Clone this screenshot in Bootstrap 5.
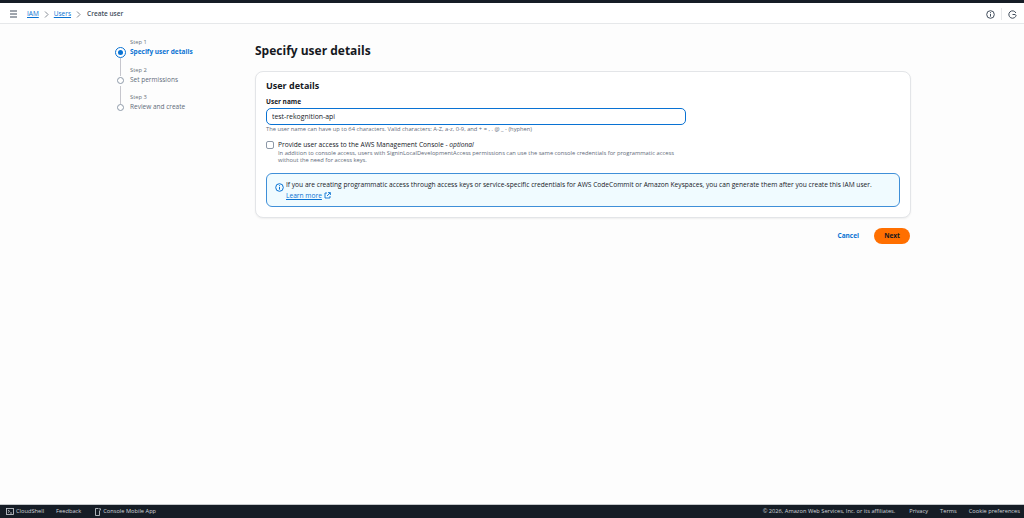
<!DOCTYPE html>
<html lang="en">
<head>
    <meta charset="UTF-8">
    <title>Create user</title>
    <link href="https://cdn.jsdelivr.net/npm/bootstrap@5.3.0/dist/css/bootstrap.min.css" rel="stylesheet">
    <style>
        html, body { height: 518px; overflow: hidden; }
        body { font-family: "Open Sans", "Noto Sans", sans-serif; background: #fdfdfd; color: #16191f; display: flex; flex-direction: column; }
        a { color: #0972d3; }
        .top-strip { height: 3px; background: #161d26; }
        .crumb-bar { height: 21px; background: #fff; border-bottom: 1px solid #e6e8ea; font-size: 6.5px; padding: 2px 7px 0 9px; }
        .crumb-bar a { margin-right: 5px; }
        .menu-icon { margin-right: 9px; }
        .crumb-sep { margin-right: 5px; color: #687078; }
        .crumb-now { font-weight: 600; color: #414d5c; margin-left: 1px; }
        .side-tools { gap: 6px; }
        .tool-sep { width: 1px; height: 12px; background: #e6e8ea; }
        .page-main { flex: 1; min-height: 0; padding-left: 116px; padding-right: 113px; padding-top: 14px; }
        .wiz-steps { width: 139px; flex: none; font-size: 6.5px; }
        .wiz-step { height: 27.7px; position: relative; padding-left: 14px; }
        .wiz-step .step-no { display: block; font-size: 5.8px; line-height: 8px; color: #687078; }
        .wiz-step .step-name { display: block; line-height: 12px; color: #5f6b7a; }
        .wiz-step.on .step-name { color: #0972d3; font-weight: 700; }
        .wiz-dot { position: absolute; left: 1px; top: 11px; width: 7px; height: 7px; border-radius: 50%; border: 1px solid #8d99a8; background: #fff; }
        .wiz-step.on .wiz-dot { left: -1px; top: 9px; width: 11px; height: 11px; border: 1.5px solid #0972d3; }
        .wiz-step.on .wiz-dot::after { content: ""; position: absolute; left: 1.5px; top: 1.5px; width: 5px; height: 5px; border-radius: 50%; background: #0972d3; }
        .wiz-step:not(:last-child)::after { content: ""; position: absolute; left: 4px; top: 20px; width: 1px; height: 18px; background: #c6c6cd; }
        .form-col { flex: 1; min-width: 0; }
        .page-title { font-size: 12px; font-weight: 700; line-height: 16px; margin: 5px 0 12px; }
        .detail-card { border: 1px solid #e3e5e8; border-radius: 8px; background: #fff; padding: 7px 10px 10px; box-shadow: 0 1px 2px rgba(0,7,22,.06); }
        .detail-card h2 { font-size: 9px; font-weight: 700; line-height: 13px; margin: 0 0 5px; }
        .field-label { font-size: 6.5px; font-weight: 700; line-height: 9px; margin-bottom: 2px; display: block; }
        .name-input { width: 420px; height: 17px; border: 1.5px solid #0972d3; border-radius: 5px; font-size: 6.9px; padding: 0 5px; color: #16191f; box-shadow: none; outline: none; display: block; }
        .hint-text { font-size: 5.75px; line-height: 7.5px; color: #5f6b7a; margin-top: 1px; }
        .console-check { margin-top: 6px; gap: 4px; }
        .box-check { width: 8px; height: 8px; border: 1px solid #8d99a8; border-radius: 2px; margin-top: 1px; flex: none; }
        .check-title { font-size: 6.65px; line-height: 10px; }
        .info-box { margin-top: 8px; height: 34px; border: 1.5px solid #3f8fd8; border-radius: 6px; background: #f0fbff; padding: 5px 8px; font-size: 6.64px; line-height: 11px; color: #16191f; gap: 2px; }
        .info-box svg { flex: none; }
        .act-row { margin-top: 10px; font-size: 6.5px; }
        .cancel-link { color: #0972d3; font-weight: 700; text-decoration: none; }
        .next-btn { width: 36px; height: 16px; border-radius: 8px; background: #ff6f00; color: #16191f; font-size: 6.5px; font-weight: 700; border: 0; padding: 0; margin-left: 15px; margin-right: 1px; }
        .foot-bar { height: 13px; background: #161d26; color: #d1d5db; font-size: 5.7px; padding: 0 4px 0 6px; border-top: 1px solid #c6c9cc; box-sizing: content-box; }
        .foot-bar span { white-space: nowrap; }
        .foot-icon { margin-right: 2px; }
        .foot-gap { margin-left: 12px; }
        .foot-gap-wide { margin-left: 14px; }
    </style>
</head>
<body>
<div class="top-strip"></div>
<div class="crumb-bar d-flex align-items-center">
    <svg width="9" height="8" viewBox="0 0 9 8" class="menu-icon" fill="none" stroke="#414d5c" stroke-width="1"><path d="M1 1h7M1 4h7M1 7h7"/></svg>
    <a href="#">IAM</a>
    <svg class="crumb-sep" width="5" height="7" viewBox="0 0 5 7" fill="none" stroke="currentColor" stroke-width=".8"><path d="M1 .5l3 3-3 3"/></svg>
    <a href="#">Users</a>
    <svg class="crumb-sep" width="5" height="7" viewBox="0 0 5 7" fill="none" stroke="currentColor" stroke-width=".8"><path d="M1 .5l3 3-3 3"/></svg>
    <span class="crumb-now">Create user</span>
    <div class="ms-auto d-flex align-items-center side-tools">
        <svg width="9" height="9" viewBox="0 0 9 9" fill="none" stroke="#414d5c"><circle cx="4.5" cy="4.5" r="3.8"/><path d="M4.5 4v2.6M4.5 2.2v1"/></svg>
        <div class="tool-sep"></div>
        <svg width="9" height="9" viewBox="0 0 9 9" fill="none" stroke="#414d5c"><path d="M7.9 3A3.7 3.7 0 1 0 8.2 5"/><path d="M4.5 4.5h3"/></svg>
    </div>
</div>
<main class="page-main d-flex">
    <nav class="wiz-steps">
        <div class="wiz-step on"><span class="step-no">Step 1</span><span class="step-name">Specify user details</span><i class="wiz-dot"></i></div>
        <div class="wiz-step"><span class="step-no">Step 2</span><span class="step-name">Set permissions</span><i class="wiz-dot"></i></div>
        <div class="wiz-step"><span class="step-no">Step 3</span><span class="step-name">Review and create</span><i class="wiz-dot"></i></div>
    </nav>
    <div class="form-col">
        <h1 class="page-title">Specify user details</h1>
        <section class="detail-card">
            <h2>User details</h2>
            <label class="field-label" for="userName">User name</label>
            <input id="userName" class="name-input" type="text" value="test-rekognition-api" autofocus>
            <div class="hint-text">The user name can have up to 64 characters. Valid characters: A-Z, a-z, 0-9, and + = , . @ _ - (hyphen)</div>
            <div class="console-check d-flex">
                <div class="box-check"></div>
                <div>
                    <div class="check-title">Provide user access to the AWS Management Console - <em>optional</em></div>
                    <div class="hint-text mt-0">In addition to console access, users with SigninLocalDevelopmentAccess permissions can use the same console credentials for programmatic access<br>without the need for access keys.</div>
                </div>
            </div>
            <div class="info-box d-flex">
                <svg width="9" height="9" viewBox="0 0 9 9" fill="none" stroke="#0972d3" class="mt-1"><circle cx="4.5" cy="4.5" r="3.8"/><path d="M4.5 4v2.6M4.5 2.2v1"/></svg>
                <div>If you are creating programmatic access through access keys or service-specific credentials for AWS CodeCommit or Amazon Keyspaces, you can generate them after you create this IAM user.<br>
                    <a href="#">Learn more</a>
                    <svg width="7" height="7" viewBox="0 0 7 7" fill="none" stroke="#0972d3" stroke-width=".9"><path d="M3 1H1v5h5V4M4 .6h2.4V3M6.2.8L3 4"/></svg>
                </div>
            </div>
        </section>
        <div class="act-row d-flex justify-content-end align-items-center">
            <a class="cancel-link" href="#">Cancel</a>
            <button class="next-btn btn" type="button">Next</button>
        </div>
    </div>
</main>
<footer class="foot-bar d-flex align-items-center">
    <svg width="8" height="7" viewBox="0 0 8 7" fill="none" stroke="#d1d5db" stroke-width=".8" class="foot-icon"><rect x=".5" y=".5" width="7" height="6"/><path d="M2 2l1.5 1.3L2 4.6M4 5h2"/></svg>
    <span>CloudShell</span>
    <span class="foot-gap">Feedback</span>
    <svg width="6" height="8" viewBox="0 0 6 8" fill="none" stroke="#d1d5db" stroke-width=".8" class="foot-gap-wide foot-icon"><path d="M4.5 2.5v5h-4v-7h3"/><path d="M4 .8h1.6v1.6"/></svg>
    <span>Console Mobile App</span>
    <span class="ms-auto">© 2026, Amazon Web Services, Inc. or its affiliates.</span>
    <span class="foot-gap-wide">Privacy</span>
    <span class="foot-gap">Terms</span>
    <span class="foot-gap">Cookie preferences</span>
</footer>
<script src="https://cdn.jsdelivr.net/npm/bootstrap@5.3.0/dist/js/bootstrap.bundle.min.js"></script>
</body>
</html>
